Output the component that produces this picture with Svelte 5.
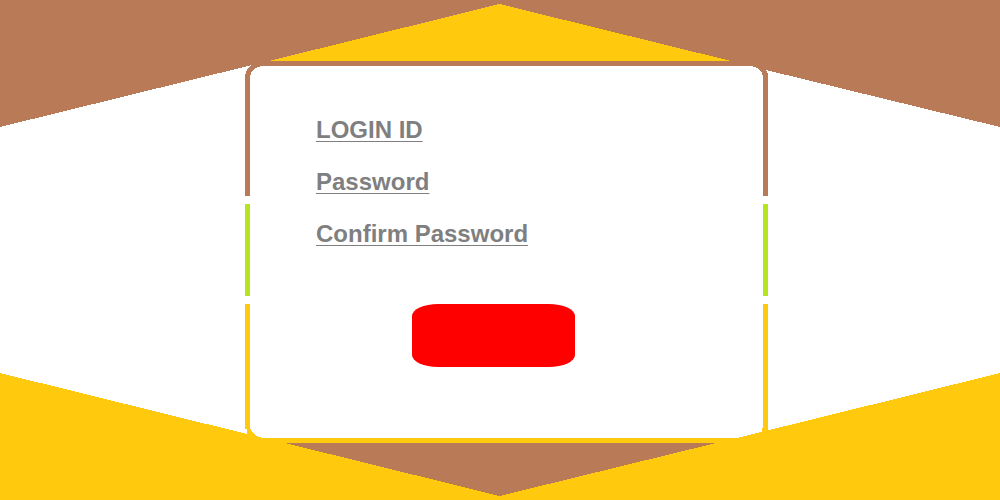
<script>
  const fields = [
    { id: 'login', label: 'LOGIN ID', type: 'text', autocomplete: 'username' },
    { id: 'password', label: 'Password', type: 'password', autocomplete: 'new-password' },
    { id: 'confirm', label: 'Confirm Password', type: 'password', autocomplete: 'new-password' }
  ];
</script>

<main class="page">
  <svg class="backdrop" viewBox="0 0 1000 500" preserveAspectRatio="none" shape-rendering="crispEdges" aria-hidden="true">
    <!-- upper and lower wedges -->
    <path class="brown" d="M0 0H1000V127L766 70V66H252V65L0 127Z" />
    <path class="gold" d="M0 500V373L247 434L262 438H737L1000 373V500Z" />
    <path class="gold" d="M499.5 4L731 61H269Z" />
    <path class="brown" d="M285 443H716L499.5 496Z" />

    <!-- card frame -->
    <path class="brown" d="M245 196V76Q246 69 252 65L262 66Q251 68 250 77V196Z" />
    <path class="brown" d="M763 196V76Q761 68 752 66H766V70Q768 73 768 76V196Z" />
    <path class="lime" d="M245 204H250V296H245ZM763 204H768V296H763Z" />
    <path class="gold" d="M245 304H250V428Q253 436 262 438H250L247 434V429H245Z" />
    <path class="gold" d="M763 304H768V431L762 433V428H763Z" />
  </svg>

  <form class="form" onsubmit={(event) => event.preventDefault()}>
    {#each fields as field (field.id)}
      <div class="row">
        <label for={field.id}>{field.label}</label>
        <input id={field.id} name={field.id} type={field.type} autocomplete={field.autocomplete} />
      </div>
    {/each}
    <button type="submit" aria-label="Submit"></button>
  </form>
</main>

<style>
  :global(body) {
    margin: 0;
    background: #fff;
  }

  .page {
    position: relative;
    box-sizing: border-box;
    min-height: 100vh;
    padding: 116px 24% 72px;
    font-family: "Liberation Sans", Arial, sans-serif;
  }

  .backdrop {
    position: absolute;
    inset: 0;
    width: 100%;
    height: 100%;
  }

  .brown { fill: #b97a57; }
  .gold { fill: #ffc90e; }
  .lime { fill: #b5e61d; }

  .form {
    position: relative;
    display: flex;
    flex-direction: column;
    gap: 24px;
    padding: 0 16px 0 76px;
  }

  .row {
    display: flex;
    gap: 12px;
    height: 28px;
  }

  label {
    color: #7f7f7f;
    font-size: 24px;
    font-weight: 700;
    line-height: 28px;
    white-space: nowrap;
    text-decoration: underline;
    text-decoration-thickness: 1px;
    text-underline-offset: 3px;
    text-decoration-skip-ink: none;
  }

  input {
    flex: 1;
    min-width: 0;
    padding: 0;
    border: 0;
    outline: 0;
    background: transparent;
    color: #7f7f7f;
    font: inherit;
  }

  button {
    width: 163px;
    height: 63px;
    margin: 32px 0 0 96px;
    padding: 0;
    border: 0;
    border-radius: 26px / 12px;
    background: #f00;
    cursor: pointer;
  }
</style>
